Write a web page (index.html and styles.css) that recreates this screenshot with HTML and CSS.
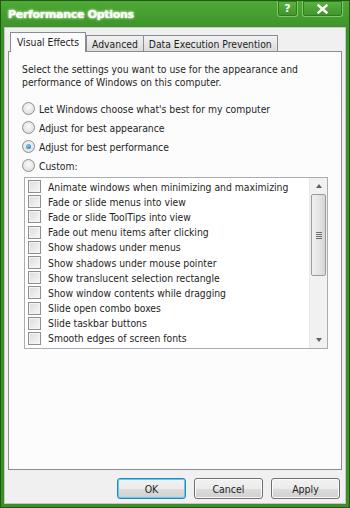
FILE: index.html
```html
<!DOCTYPE html>
<html lang="en">
<head>
  <meta charset="UTF-8" />
  <title>Performance Options</title>
  <link rel="stylesheet" href="styles.css">
</head>
<body>
  <div class="window">
    <div class="titlebar">
      <span class="title">Performance Options</span>
      <div class="caption-btns">
        <span class="cap-btn help">?</span>
        <span class="cap-btn close">
          <svg width="11" height="10" viewBox="0 0 11 10"><path d="M1.5 1.5 L9.5 8.5 M9.5 1.5 L1.5 8.5" stroke="#fff" stroke-width="2.4" stroke-linecap="square"/></svg>
        </span>
      </div>
    </div>

    <div class="client">
      <div class="tabs">
        <span class="tab active">Visual Effects</span>
        <span class="tab">Advanced</span>
        <span class="tab">Data Execution Prevention</span>
      </div>

      <div class="panel">
        <p class="intro">Select the settings you want to use for the appearance and performance of Windows on this computer.</p>

        <div class="radios">
          <label class="radio"><span class="dot"></span>Let Windows choose what's best for my computer</label>
          <label class="radio"><span class="dot"></span>Adjust for best appearance</label>
          <label class="radio checked"><span class="dot"></span>Adjust for best performance</label>
          <label class="radio"><span class="dot"></span>Custom:</label>
        </div>

        <div class="listbox">
          <ul class="items">
            <li><span class="box"></span>Animate windows when minimizing and maximizing</li>
            <li><span class="box"></span>Fade or slide menus into view</li>
            <li><span class="box"></span>Fade or slide ToolTips into view</li>
            <li><span class="box"></span>Fade out menu items after clicking</li>
            <li><span class="box"></span>Show shadows under menus</li>
            <li><span class="box"></span>Show shadows under mouse pointer</li>
            <li><span class="box"></span>Show translucent selection rectangle</li>
            <li><span class="box"></span>Show window contents while dragging</li>
            <li><span class="box"></span>Slide open combo boxes</li>
            <li><span class="box"></span>Slide taskbar buttons</li>
            <li class="cut"><span class="box"></span>Smooth edges of screen fonts</li>
          </ul>
          <div class="scrollbar">
            <span class="arrow up"></span>
            <div class="track">
              <div class="thumb"><span class="grip"></span></div>
            </div>
            <span class="arrow down"></span>
          </div>
        </div>
      </div>

      <div class="buttons">
        <button class="btn default">OK</button>
        <button class="btn">Cancel</button>
        <button class="btn">Apply</button>
      </div>
    </div>
  </div>
</body>
</html>
```

FILE: styles.css
```css
:root {
  --face: #f0f0f0;
  --text: #1e1e1e;
  --line: #898c95;
  --ui-font: "DejaVu Sans Condensed", "DejaVu Sans", Verdana, sans-serif;
}

html, body {
  margin: 0;
  padding: 0;
  width: 350px;
  height: 508px;
  overflow: hidden;
  font-family: var(--ui-font);
  font-size: 10.3px;
  color: var(--text);
}

.window {
  width: 350px;
  height: 508px;
  box-sizing: border-box;
  display: flex;
  flex-direction: column;
  background: linear-gradient(#4fa836, #3b9227 30px, #3a8f27);
  border: 1px solid #1f5a14;
  padding: 0 3px 3px 3px;
}

.titlebar {
  height: 26px;
  display: flex;
  justify-content: space-between;
  align-items: flex-start;
  flex-shrink: 0;
}

.title {
  margin: 7px 0 0 4px;
  color: #fff;
  font-family: "DejaVu Sans", sans-serif;
  font-weight: bold;
  font-size: 11px;
  letter-spacing: -0.3px;
  text-shadow: 0 0 3px #cfeec0, 0 0 2px #cfeec0, 0 0 1px #a5d98f;
}

.caption-btns {
  display: flex;
  gap: 4px;
  margin-right: 3px;
}

.cap-btn {
  height: 16px;
  display: flex;
  align-items: center;
  justify-content: center;
  box-sizing: border-box;
  border: 1px solid #7fc86a;
  border-top: none;
  border-radius: 0 0 3px 3px;
  background: linear-gradient(#5bb341, #3e9429);
  box-shadow: inset 0 0 0 1px #2f7d1e;
  color: #fff;
  font-family: "DejaVu Sans", sans-serif;
  font-weight: bold;
  font-size: 11px;
}

.help {
  width: 21px;
}

.close {
  width: 41px;
}

.client {
  flex: 1;
  background: var(--face);
  border: 1px solid #c6c6c6;
  display: flex;
  flex-direction: column;
  padding: 4px 3px 0 3px;
}

.tabs {
  display: flex;
  align-items: flex-end;
  height: 19px;
  padding-left: 2px;
  position: relative;
  z-index: 1;
}

.tab {
  height: 16px;
  box-sizing: border-box;
  padding: 1px 5px 0 5px;
  border: 1px solid var(--line);
  border-bottom: none;
  background: linear-gradient(#f2f2f2, #dcdcdc);
  margin-left: -1px;
  white-space: nowrap;
  line-height: 14px;
}

.tab.active {
  height: 20px;
  background: #fcfcfc;
  padding: 2px 6px 0 6px;
  margin-left: 0;
  margin-bottom: -1px;
  position: relative;
  z-index: 2;
}

.tab.active + .tab {
  margin-left: 0;
}

.panel {
  height: 419px;
  box-sizing: border-box;
  border: 1px solid var(--line);
  background: #fcfcfc;
  padding: 11px 13px 0 13px;
}

.intro {
  margin: 0 0 13px 0;
  line-height: 13px;
  width: 296px;
}

.radios {
  display: flex;
  flex-direction: column;
  gap: 6px;
}

.radio {
  display: flex;
  align-items: center;
  height: 13px;
  gap: 4px;
}

.dot {
  width: 11px;
  height: 11px;
  border-radius: 50%;
  border: 1px solid #8e8f8f;
  background: radial-gradient(circle at 50% 40%, #fbfbfb, #d7d7d7);
  flex-shrink: 0;
  display: flex;
  align-items: center;
  justify-content: center;
}

.radio.checked .dot::after {
  content: "";
  width: 5px;
  height: 5px;
  border-radius: 50%;
  background: radial-gradient(circle at 40% 35%, #7fd1ff, #1a5fa8);
}

.listbox {
  margin: 5px 0 0 2px;
  width: 304px;
  height: 172px;
  box-sizing: border-box;
  border: 1px solid #aaadb3;
  background: #fff;
  display: flex;
  overflow: hidden;
}

.items {
  list-style: none;
  margin: 0;
  padding: 1px 0 0 3px;
  flex: 1;
  min-width: 0;
}

.items li {
  height: 15.2px;
  display: flex;
  align-items: center;
  gap: 7px;
  white-space: nowrap;
}

.box {
  width: 11px;
  height: 11px;
  border: 1px solid #8f8f8f;
  background: linear-gradient(135deg, #dcdcdc, #f7f7f7);
  box-shadow: inset 0 0 0 1px #f4f4f4;
  flex-shrink: 0;
}

.scrollbar {
  width: 17px;
  flex-shrink: 0;
  display: flex;
  flex-direction: column;
  background: #f1f1f1;
  border-left: 1px solid #e8e8e8;
}

.arrow {
  height: 16px;
  display: flex;
  align-items: center;
  justify-content: center;
  flex-shrink: 0;
}

.arrow::after {
  content: "";
  border-left: 3px solid transparent;
  border-right: 3px solid transparent;
}

.arrow.up::after {
  border-bottom: 4px solid #606060;
}

.arrow.down::after {
  border-top: 4px solid #606060;
}

.track {
  flex: 1;
  padding: 0 1px;
}

.thumb {
  height: 82px;
  box-sizing: border-box;
  border: 1px solid #9a9a9a;
  border-radius: 2px;
  background: linear-gradient(90deg, #f0f0f0, #e2e2e2 60%, #d6d6d6);
  display: flex;
  align-items: center;
  justify-content: center;
}

.grip {
  width: 6px;
  height: 7px;
  background: repeating-linear-gradient(#6d6d6d 0 1px, transparent 1px 2px);
}

.buttons {
  display: flex;
  justify-content: flex-end;
  gap: 8px;
  padding: 8px 2px 0 0;
}

.btn {
  width: 69px;
  height: 21px;
  font-family: var(--ui-font);
  font-size: 10.5px;
  color: var(--text);
  border: 1px solid #707070;
  border-radius: 3px;
  background: linear-gradient(#f2f2f2 0%, #ebebeb 50%, #dddddd 51%, #cfcfcf 100%);
  box-shadow: inset 0 0 0 1px #fbfbfb;
  padding: 0;
}

.btn.default {
  border-color: #3c7fb1;
  box-shadow: inset 0 0 0 1px #48d4f9;
}
```
